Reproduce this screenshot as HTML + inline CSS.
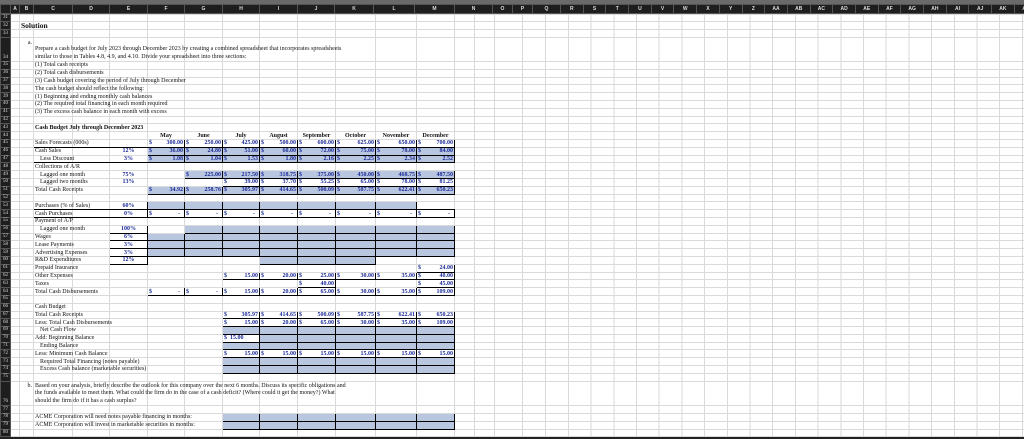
<!DOCTYPE html>
<html><head><meta charset="utf-8"><style>
*{margin:0;padding:0;box-sizing:border-box}
body{width:1024px;height:438px;overflow:hidden;background:#fff;font-family:"Liberation Serif",serif}
.top{height:4px;background:#6a6a6a}
table{border-collapse:collapse;table-layout:fixed;width:1024px}
td{border:1px solid #dadada;padding:0 1px;font-size:6px;line-height:6px;white-space:nowrap;overflow:visible;color:#111;vertical-align:middle}
tr{height:7.8px}
td.rh{background:#1e1e1e;color:#ddd;font-size:5px;text-align:center;border-color:#555}
tr.h td{background:#1e1e1e;color:#ddd;font-size:5px;text-align:center;font-family:"Liberation Sans",sans-serif;font-weight:bold;border-color:#555;height:9px}
td.r{background:repeating-linear-gradient(to right,transparent 0,transparent 21.7px,#dadada 21.7px,#dadada 22.7px);border-left:none;border-right:none}
tr.h td.hr{padding:0;background:#1e1e1e}
.hr div{display:flex}.hr span{width:22.7px;flex:none;border-right:1px solid #555;text-align:center;line-height:8px}
.v{border:1px solid #000;color:#1d2c9a;font-weight:bold;text-align:right}
.v i{float:left;font-style:normal}
.b{background:#b8c7df;border:1px solid #000}
.vb{background:#b8c7df}
.p{color:#1d2c9a;font-weight:bold;text-align:center}
.pb{border:1px solid #000}
.m{font-weight:bold;text-align:center}
.in{padding-left:6px}
.hl{border-bottom:1px solid #000}
</style></head><body>
<div class="top"></div>
<table>
<colgroup><col style="width:10px"><col style="width:9px"><col style="width:14px"><col style="width:39px"><col style="width:37px"><col style="width:38px"><col style="width:37px"><col style="width:38px"><col style="width:37px"><col style="width:38px"><col style="width:37px"><col style="width:39px"><col style="width:41px"><col style="width:40px"><col style="width:38px"><col style="width:20px"><col style="width:20px"><col style="width:28px"><col style="width:502px"></colgroup>
<tr class="h"><td></td><td>A</td><td>B</td><td>C</td><td>D</td><td>E</td><td>F</td><td>G</td><td>H</td><td>I</td><td>J</td><td>K</td><td>L</td><td>M</td><td>N</td><td>O</td><td>P</td><td>Q</td><td class="hr"><div><span>R</span><span>S</span><span>T</span><span>U</span><span>V</span><span>W</span><span>X</span><span>Y</span><span>Z</span><span>AA</span><span>AB</span><span>AC</span><span>AD</span><span>AE</span><span>AF</span><span>AG</span><span>AH</span><span>AI</span><span>AJ</span><span>AK</span><span>AL</span><span>AM</span></div></td></tr>
</table>
<table>
<colgroup><col style="width:10px"><col style="width:9px"><col style="width:14px"><col style="width:39px"><col style="width:37px"><col style="width:38px"><col style="width:37px"><col style="width:38px"><col style="width:37px"><col style="width:38px"><col style="width:38px"><col style="width:40px"><col style="width:41px"><col style="width:38px"><col style="width:20px"><col style="width:20px"><col style="width:28px"><col style="width:502px"></colgroup>
<tr style="height:6px"><td class="rh">31</td><td></td><td></td><td></td><td></td><td></td><td></td><td></td><td></td><td></td><td></td><td></td><td></td><td></td><td></td><td></td><td></td><td class="r"></td></tr>
<tr style="height:8px"><td class="rh">32</td><td></td><td style="font-weight:bold;font-size:7.5px">Solution</td><td></td><td></td><td></td><td></td><td></td><td></td><td></td><td></td><td></td><td></td><td></td><td></td><td></td><td></td><td class="r"></td></tr>
<tr style="height:8px"><td class="rh">33</td><td></td><td></td><td></td><td></td><td></td><td></td><td></td><td></td><td></td><td></td><td></td><td></td><td></td><td></td><td></td><td></td><td class="r"></td></tr>
<tr style="height:24px"><td class="rh" style="vertical-align:bottom">34</td><td></td><td style="vertical-align:top;text-align:right;padding-top:2px">a.</td><td style="vertical-align:bottom;line-height:7.5px">Prepare a cash budget for July 2023 through December 2023 by creating a combined spreadsheet that incorporates spreadsheets<br>similar to those in Tables 4.8, 4.9, and 4.10. Divide your spreadsheet into three sections:</td><td></td><td></td><td></td><td></td><td></td><td></td><td></td><td></td><td></td><td></td><td></td><td></td><td></td><td class="r"></td></tr>
<tr><td class="rh">35</td><td></td><td></td><td>(1) Total cash receipts</td><td></td><td></td><td></td><td></td><td></td><td></td><td></td><td></td><td></td><td></td><td></td><td></td><td></td><td class="r"></td></tr>
<tr><td class="rh">36</td><td></td><td></td><td>(2) Total cash disbursements</td><td></td><td></td><td></td><td></td><td></td><td></td><td></td><td></td><td></td><td></td><td></td><td></td><td></td><td class="r"></td></tr>
<tr><td class="rh">37</td><td></td><td></td><td>(3) Cash budget covering the period of July through December</td><td></td><td></td><td></td><td></td><td></td><td></td><td></td><td></td><td></td><td></td><td></td><td></td><td></td><td class="r"></td></tr>
<tr><td class="rh">38</td><td></td><td></td><td>The cash budget should reflect the following:</td><td></td><td></td><td></td><td></td><td></td><td></td><td></td><td></td><td></td><td></td><td></td><td></td><td></td><td class="r"></td></tr>
<tr><td class="rh">39</td><td></td><td></td><td>(1) Beginning and ending monthly cash balances</td><td></td><td></td><td></td><td></td><td></td><td></td><td></td><td></td><td></td><td></td><td></td><td></td><td></td><td class="r"></td></tr>
<tr><td class="rh">40</td><td></td><td></td><td>(2) The required total financing in each month required</td><td></td><td></td><td></td><td></td><td></td><td></td><td></td><td></td><td></td><td></td><td></td><td></td><td></td><td class="r"></td></tr>
<tr><td class="rh">41</td><td></td><td></td><td>(3) The excess cash balance in each month with excess</td><td></td><td></td><td></td><td></td><td></td><td></td><td></td><td></td><td></td><td></td><td></td><td></td><td></td><td class="r"></td></tr>
<tr><td class="rh">42</td><td></td><td></td><td></td><td></td><td></td><td></td><td></td><td></td><td></td><td></td><td></td><td></td><td></td><td></td><td></td><td></td><td class="r"></td></tr>
<tr><td class="rh">43</td><td></td><td></td><td style="font-weight:bold">Cash Budget July through December 2023</td><td></td><td></td><td></td><td></td><td></td><td></td><td></td><td></td><td></td><td></td><td></td><td></td><td></td><td class="r"></td></tr>
<tr><td class="rh">44</td><td></td><td></td><td></td><td></td><td></td><td class="m">May</td><td class="m">June</td><td class="m">July</td><td class="m">August</td><td class="m">September</td><td class="m">October</td><td class="m">November</td><td class="m">December</td><td></td><td></td><td></td><td class="r"></td></tr>
<tr><td class="rh">45</td><td></td><td></td><td class="hl">Sales Forecasts (000s)</td><td class="hl"></td><td class="hl"></td><td class="v"><i>$</i>300.00</td><td class="v"><i>$</i>250.00</td><td class="v"><i>$</i>425.00</td><td class="v"><i>$</i>500.00</td><td class="v"><i>$</i>600.00</td><td class="v"><i>$</i>625.00</td><td class="v"><i>$</i>650.00</td><td class="v"><i>$</i>700.00</td><td></td><td></td><td></td><td class="r"></td></tr>
<tr><td class="rh">46</td><td></td><td></td><td>Cash Sales</td><td></td><td class="p">12%</td><td class="v vb"><i>$</i>36.00</td><td class="v vb"><i>$</i>24.80</td><td class="v vb"><i>$</i>51.00</td><td class="v vb"><i>$</i>60.00</td><td class="v vb"><i>$</i>72.00</td><td class="v vb"><i>$</i>75.00</td><td class="v vb"><i>$</i>78.00</td><td class="v vb"><i>$</i>84.00</td><td></td><td></td><td></td><td class="r"></td></tr>
<tr><td class="rh">47</td><td></td><td></td><td class="in hl">Less Discount</td><td class="hl"></td><td class="p hl">3%</td><td class="v vb"><i>$</i>1.08</td><td class="v vb"><i>$</i>1.04</td><td class="v vb"><i>$</i>1.53</td><td class="v vb"><i>$</i>1.80</td><td class="v vb"><i>$</i>2.16</td><td class="v vb"><i>$</i>2.25</td><td class="v vb"><i>$</i>2.34</td><td class="v vb"><i>$</i>2.52</td><td></td><td></td><td></td><td class="r"></td></tr>
<tr><td class="rh">48</td><td></td><td></td><td>Collections of A/R</td><td></td><td></td><td></td><td></td><td></td><td></td><td></td><td></td><td></td><td></td><td></td><td></td><td></td><td class="r"></td></tr>
<tr><td class="rh">49</td><td></td><td></td><td class="in">Lagged one month</td><td></td><td class="p">75%</td><td></td><td class="v vb"><i>$</i>225.00</td><td class="v vb"><i>$</i>217.50</td><td class="v vb"><i>$</i>318.75</td><td class="v vb"><i>$</i>375.00</td><td class="v vb"><i>$</i>450.00</td><td class="v vb"><i>$</i>468.75</td><td class="v vb"><i>$</i>487.50</td><td></td><td></td><td></td><td class="r"></td></tr>
<tr><td class="rh">50</td><td></td><td></td><td class="in">Lagged two months</td><td></td><td class="p">13%</td><td></td><td></td><td class="v"><i>$</i>39.00</td><td class="v"><i>$</i>37.70</td><td class="v"><i>$</i>55.25</td><td class="v"><i>$</i>65.00</td><td class="v"><i>$</i>78.00</td><td class="v"><i>$</i>81.25</td><td></td><td></td><td></td><td class="r"></td></tr>
<tr><td class="rh">51</td><td></td><td></td><td>Total Cash Receipts</td><td></td><td></td><td class="v vb"><i>$</i>34.92</td><td class="v vb"><i>$</i>258.76</td><td class="v vb"><i>$</i>305.97</td><td class="v vb"><i>$</i>414.65</td><td class="v vb"><i>$</i>500.09</td><td class="v vb"><i>$</i>587.75</td><td class="v vb"><i>$</i>622.41</td><td class="v vb"><i>$</i>650.23</td><td></td><td></td><td></td><td class="r"></td></tr>
<tr><td class="rh">52</td><td></td><td></td><td></td><td></td><td></td><td></td><td></td><td></td><td></td><td></td><td></td><td></td><td></td><td></td><td></td><td></td><td class="r"></td></tr>
<tr><td class="rh">53</td><td></td><td></td><td class="hl">Purchases (% of Sales)</td><td class="hl"></td><td class="p pb">60%</td><td class="b"></td><td class="b"></td><td class="b"></td><td class="b"></td><td class="b"></td><td class="b"></td><td class="b"></td><td class="hl"></td><td></td><td></td><td></td><td class="r"></td></tr>
<tr><td class="rh">54</td><td></td><td></td><td class="hl">Cash Purchases</td><td class="hl"></td><td class="p pb">0%</td><td class="v"><i>$</i>-&nbsp;&nbsp;</td><td class="v"><i>$</i>-&nbsp;&nbsp;</td><td class="v"><i>$</i>-&nbsp;&nbsp;</td><td class="v"><i>$</i>-&nbsp;&nbsp;</td><td class="v"><i>$</i>-&nbsp;&nbsp;</td><td class="v"><i>$</i>-&nbsp;&nbsp;</td><td class="v"><i>$</i>-&nbsp;&nbsp;</td><td class="v"><i>$</i>-&nbsp;&nbsp;</td><td></td><td></td><td></td><td class="r"></td></tr>
<tr><td class="rh">55</td><td></td><td></td><td>Payment of A/P</td><td></td><td></td><td></td><td></td><td></td><td></td><td></td><td></td><td></td><td></td><td></td><td></td><td></td><td class="r"></td></tr>
<tr><td class="rh">56</td><td></td><td></td><td class="in">Lagged one month</td><td></td><td class="p pb">100%</td><td></td><td class="b"></td><td class="b"></td><td class="b"></td><td class="b"></td><td class="b"></td><td class="b"></td><td class="b"></td><td></td><td></td><td></td><td class="r"></td></tr>
<tr><td class="rh">57</td><td></td><td></td><td>Wages</td><td></td><td class="p pb">6%</td><td class="b"></td><td class="b"></td><td class="b"></td><td class="b"></td><td class="b"></td><td class="b"></td><td class="b"></td><td class="b"></td><td></td><td></td><td></td><td class="r"></td></tr>
<tr><td class="rh">58</td><td></td><td></td><td>Lease Payments</td><td></td><td class="p pb">3%</td><td class="b"></td><td class="b"></td><td class="b"></td><td class="b"></td><td class="b"></td><td class="b"></td><td class="b"></td><td class="b"></td><td></td><td></td><td></td><td class="r"></td></tr>
<tr><td class="rh">59</td><td></td><td></td><td>Advertising Expenses</td><td></td><td class="p pb">3%</td><td class="b"></td><td class="b"></td><td class="b"></td><td class="b"></td><td class="b"></td><td class="b"></td><td class="b"></td><td class="b"></td><td></td><td></td><td></td><td class="r"></td></tr>
<tr><td class="rh">60</td><td></td><td></td><td>R&amp;D Expenditures</td><td></td><td class="p pb">12%</td><td></td><td></td><td></td><td class="b"></td><td class="b"></td><td class="b"></td><td></td><td></td><td></td><td></td><td></td><td class="r"></td></tr>
<tr><td class="rh">61</td><td></td><td></td><td>Prepaid Insurance</td><td></td><td></td><td></td><td></td><td></td><td></td><td></td><td></td><td></td><td class="v"><i>$</i>24.00</td><td></td><td></td><td></td><td class="r"></td></tr>
<tr><td class="rh">62</td><td></td><td></td><td>Other Expenses</td><td></td><td></td><td></td><td></td><td class="v"><i>$</i>15.00</td><td class="v"><i>$</i>20.00</td><td class="v"><i>$</i>25.00</td><td class="v"><i>$</i>30.00</td><td class="v"><i>$</i>35.00</td><td class="v"><i>$</i>40.00</td><td></td><td></td><td></td><td class="r"></td></tr>
<tr><td class="rh">63</td><td></td><td></td><td>Taxes</td><td></td><td></td><td></td><td></td><td></td><td></td><td class="v"><i>$</i>40.00</td><td></td><td></td><td class="v"><i>$</i>45.00</td><td></td><td></td><td></td><td class="r"></td></tr>
<tr><td class="rh">64</td><td></td><td></td><td>Total Cash Disbursements</td><td></td><td></td><td class="v"><i>$</i>-&nbsp;&nbsp;</td><td class="v"><i>$</i>-&nbsp;&nbsp;</td><td class="v"><i>$</i>15.00</td><td class="v"><i>$</i>20.00</td><td class="v"><i>$</i>65.00</td><td class="v"><i>$</i>30.00</td><td class="v"><i>$</i>35.00</td><td class="v"><i>$</i>109.00</td><td></td><td></td><td></td><td class="r"></td></tr>
<tr><td class="rh">65</td><td></td><td></td><td></td><td></td><td></td><td></td><td></td><td></td><td></td><td></td><td></td><td></td><td></td><td></td><td></td><td></td><td class="r"></td></tr>
<tr><td class="rh">66</td><td></td><td></td><td>Cash Budget</td><td></td><td></td><td></td><td></td><td></td><td></td><td></td><td></td><td></td><td></td><td></td><td></td><td></td><td class="r"></td></tr>
<tr><td class="rh">67</td><td></td><td></td><td>Total Cash Receipts</td><td></td><td></td><td></td><td></td><td class="v"><i>$</i>305.97</td><td class="v"><i>$</i>414.65</td><td class="v"><i>$</i>500.09</td><td class="v"><i>$</i>587.75</td><td class="v"><i>$</i>622.41</td><td class="v"><i>$</i>650.23</td><td></td><td></td><td></td><td class="r"></td></tr>
<tr><td class="rh">68</td><td></td><td></td><td>Less: Total Cash Disbursements</td><td></td><td></td><td></td><td></td><td class="v"><i>$</i>15.00</td><td class="v"><i>$</i>20.00</td><td class="v"><i>$</i>65.00</td><td class="v"><i>$</i>30.00</td><td class="v"><i>$</i>35.00</td><td class="v"><i>$</i>109.00</td><td></td><td></td><td></td><td class="r"></td></tr>
<tr><td class="rh">69</td><td></td><td></td><td class="in">Net Cash Flow</td><td></td><td></td><td></td><td></td><td class="b"></td><td class="b"></td><td class="b"></td><td class="b"></td><td class="b"></td><td class="b"></td><td></td><td></td><td></td><td class="r"></td></tr>
<tr><td class="rh">70</td><td></td><td></td><td>Add: Beginning Balance</td><td></td><td></td><td></td><td></td><td class="v" style="text-align:left"><i>$</i>&nbsp;&nbsp;15.00</td><td class="b"></td><td class="b"></td><td class="b"></td><td class="b"></td><td class="b"></td><td></td><td></td><td></td><td class="r"></td></tr>
<tr><td class="rh">71</td><td></td><td></td><td class="in">Ending Balance</td><td></td><td></td><td></td><td></td><td class="b"></td><td class="b"></td><td class="b"></td><td class="b"></td><td class="b"></td><td class="b"></td><td></td><td></td><td></td><td class="r"></td></tr>
<tr><td class="rh">72</td><td></td><td></td><td>Less: Minimum Cash Balance</td><td></td><td></td><td></td><td></td><td class="v"><i>$</i>15.00</td><td class="v"><i>$</i>15.00</td><td class="v"><i>$</i>15.00</td><td class="v"><i>$</i>15.00</td><td class="v"><i>$</i>15.00</td><td class="v"><i>$</i>15.00</td><td></td><td></td><td></td><td class="r"></td></tr>
<tr><td class="rh">73</td><td></td><td></td><td class="in">Required Total Financing (notes payable)</td><td></td><td></td><td></td><td></td><td class="b"></td><td class="b"></td><td class="b"></td><td class="b"></td><td class="b"></td><td class="b"></td><td></td><td></td><td></td><td class="r"></td></tr>
<tr><td class="rh">74</td><td></td><td></td><td class="in">Excess Cash balance (marketable securities)</td><td></td><td></td><td></td><td></td><td class="b"></td><td class="b"></td><td class="b"></td><td class="b"></td><td class="b"></td><td class="b"></td><td></td><td></td><td></td><td class="r"></td></tr>
<tr><td class="rh">75</td><td></td><td></td><td></td><td></td><td></td><td></td><td></td><td></td><td></td><td></td><td></td><td></td><td></td><td></td><td></td><td></td><td class="r"></td></tr>
<tr style="height:23px"><td class="rh" style="vertical-align:bottom">76</td><td></td><td style="vertical-align:top;text-align:right;padding-top:1px">b.</td><td style="vertical-align:top;line-height:7.5px;padding-top:1px">Based on your analysis, briefly describe the outlook for this company over the next 6 months. Discuss its specific obligations and<br>the funds available to meet them. What could the firm do in the case of a cash deficit? (Where could it get the money?) What<br>should the firm do if it has a cash surplus?</td><td></td><td></td><td></td><td></td><td></td><td></td><td></td><td></td><td></td><td></td><td></td><td></td><td></td><td class="r"></td></tr>
<tr><td class="rh">77</td><td></td><td></td><td></td><td></td><td></td><td></td><td></td><td></td><td></td><td></td><td></td><td></td><td></td><td></td><td></td><td></td><td class="r"></td></tr>
<tr><td class="rh">78</td><td></td><td></td><td>ACME Corporation will need notes payable financing in months:</td><td></td><td></td><td></td><td></td><td class="b"></td><td class="b"></td><td class="b"></td><td class="b"></td><td class="b"></td><td class="b"></td><td></td><td></td><td></td><td class="r"></td></tr>
<tr><td class="rh">79</td><td></td><td></td><td>ACME Corporation will invest in marketable securities in months:</td><td></td><td></td><td></td><td></td><td class="b"></td><td class="b"></td><td class="b"></td><td class="b"></td><td class="b"></td><td class="b"></td><td></td><td></td><td></td><td class="r"></td></tr>
<tr><td class="rh">80</td><td></td><td></td><td></td><td></td><td></td><td></td><td></td><td></td><td></td><td></td><td></td><td></td><td></td><td></td><td></td><td></td><td class="r"></td></tr>
</table>
<div style="height:2px;background:#222"></div>
</body></html>
